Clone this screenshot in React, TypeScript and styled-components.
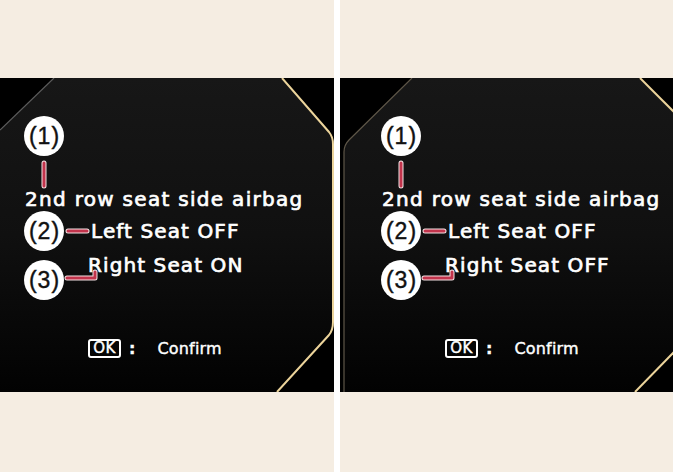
import React from 'react';
import styled, { createGlobalStyle } from 'styled-components';

const Global = createGlobalStyle`
  html, body { margin: 0; padding: 0; background: #f5ede2; }
  body { width: 673px; height: 472px; overflow: hidden; }
`;

const Page = styled.div`
  display: flex;
  width: 673px;
  height: 472px;
  background: #f5ede2;
`;

const Column = styled.div<{ $w: number }>`
  width: ${(p) => p.$w}px;
  flex-shrink: 0;
  display: flex;
  flex-direction: column;
  padding: 78px 0 80px;
  box-sizing: border-box;
`;

const Divider = styled.div`
  width: 6px;
  flex-shrink: 0;
  background: #ffffff;
`;

const Screen = styled.div`
  position: relative;
  height: 314px;
  background: #000;
  overflow: hidden;
`;

const Frame = styled.svg`
  position: absolute;
  inset: 0;
  width: 100%;
  height: 100%;
`;

const Content = styled.div<{ $inset: number }>`
  position: relative;
  display: flex;
  flex-direction: column;
  align-items: flex-start;
  padding: 38px 0 0 ${(p) => p.$inset}px;
  font-family: "DejaVu Sans", "Liberation Sans", sans-serif;
  color: #fff;
`;

const Badge = styled.div<{ $mt?: number }>`
  width: 40px;
  height: 40px;
  flex-shrink: 0;
  border-radius: 50%;
  background: #fff;
  color: #111;
  display: flex;
  align-items: center;
  justify-content: center;
  margin-top: ${(p) => p.$mt ?? 0}px;
  font-family: "Liberation Sans", Arial, sans-serif;
  font-size: 23px;
  letter-spacing: 1px;
  padding-left: 1px;
  box-sizing: border-box;
  line-height: 1;
  -webkit-text-stroke: 0.4px #111;
`;

const Title = styled.div`
  font-size: 20px;
  line-height: 22px;
  letter-spacing: 1.3px;
  margin-left: 1px;
  white-space: nowrap;
  -webkit-text-stroke: 0.7px #fff;
`;

const Row = styled.div<{ $mt: number; $align: string }>`
  display: flex;
  align-items: ${(p) => p.$align};
  margin-top: ${(p) => p.$mt}px;
`;

const Label = styled.div<{ $ml?: number }>`
  font-size: 20px;
  line-height: 22px;
  letter-spacing: 1.1px;
  white-space: nowrap;
  margin-left: ${(p) => p.$ml ?? 0}px;
  -webkit-text-stroke: 0.7px #fff;
`;

const Stack = styled.div`
  display: flex;
  flex-direction: column;
  margin-left: 0;
`;

const LeadSvg = styled.svg<{ $ml: number; $mt: number }>`
  display: block;
  flex-shrink: 0;
  overflow: visible;
  margin-left: ${(p) => p.$ml}px;
  margin-top: ${(p) => p.$mt}px;
`;

const OkRow = styled.div`
  display: flex;
  align-items: center;
  margin: 39px 0 0 64px;
  font-size: 16px;
  -webkit-text-stroke: 0.4px #fff;
`;

const OkKey = styled.div`
  width: 33px;
  height: 19px;
  box-sizing: border-box;
  border: 2px solid #fff;
  border-radius: 3px;
  display: flex;
  align-items: center;
  justify-content: center;
  font-size: 15px;
  line-height: 1;
  letter-spacing: 0.5px;
`;

const Colon = styled.span`
  margin-left: 8px;
  font-weight: bold;
`;

const Action = styled.span`
  margin-left: 22px;
  letter-spacing: 0.2px;
`;

function Leader({ d, w, h, ml = 0, mt = 0 }: { d: string; w: number; h: number; ml?: number; mt?: number }) {
  return (
    <LeadSvg width={w} height={h} viewBox={`0 0 ${w} ${h}`} $ml={ml} $mt={mt}>
      <path d={d} stroke="#f4e2e4" strokeWidth={5} fill="none" strokeLinecap="round" strokeLinejoin="round" />
      <path d={d} stroke="#c2344c" strokeWidth={3} fill="none" strokeLinecap="round" strokeLinejoin="round" />
    </LeadSvg>
  );
}

function LeftFrame() {
  return (
    <Frame viewBox="0 0 334 314" preserveAspectRatio="none">
      <defs>
        <linearGradient id="fillL" x1="0" y1="0" x2="0" y2="1">
          <stop offset="0" stopColor="#171717" />
          <stop offset="0.5" stopColor="#101010" />
          <stop offset="1" stopColor="#020202" />
        </linearGradient>
      </defs>
      <path d="M0 52 L54 0 L282 0 L329 54 Q333 59 333 66 L333 244 Q333 252 329 257 L277 314 L0 314 Z" fill="url(#fillL)" />
      <path d="M0 52 L54 0" stroke="#5c5c5c" strokeWidth={1.2} fill="none" />
      <path d="M282 0 L329 54 Q333 59 333 66 L333 244 Q333 252 329 257 L277 314" stroke="#ecd49b" strokeWidth={2} fill="none" />
    </Frame>
  );
}

function RightFrame() {
  return (
    <Frame viewBox="0 0 333 314" preserveAspectRatio="none">
      <defs>
        <linearGradient id="fillR" x1="0" y1="0" x2="0" y2="1">
          <stop offset="0" stopColor="#171717" />
          <stop offset="0.5" stopColor="#101010" />
          <stop offset="1" stopColor="#020202" />
        </linearGradient>
      </defs>
      <path d="M4 314 L4 74 Q4 67 9 62 L72 0 L300 0 L333 32 L333 275 L295 314 Z" fill="url(#fillR)" />
      <path d="M4 314 L4 74 Q4 67 9 62 L72 0" stroke="#5e5648" strokeWidth={1.2} fill="none" />
      <path d="M300 0 L334 34" stroke="#ecd49b" strokeWidth={2} fill="none" />
      <path d="M334 274 L295 314" stroke="#ecd49b" strokeWidth={2} fill="none" />
    </Frame>
  );
}

type PanelProps = { width: number; inset: number; right: string; frame: 'left' | 'right' };

function Panel({ width, inset, right, frame }: PanelProps) {
  return (
    <Column $w={width}>
      <Screen>
        {frame === 'left' ? <LeftFrame /> : <RightFrame />}
        <Content $inset={inset}>
          <Badge>(1)</Badge>
          <Leader d="M5 2 V25" w={10} h={27} ml={15} mt={5} />
          <Title>2nd row seat side airbag</Title>
          <Row $mt={1} $align="center">
            <Badge>(2)</Badge>
            <Leader d="M3 5 H22" w={25} h={10} ml={1} />
            <Label $ml={1}>Left Seat OFF</Label>
          </Row>
          <Row $mt={3} $align="flex-start">
            <Badge $mt={6}>(3)</Badge>
            <Stack>
              <Label $ml={24}>Right Seat {right}</Label>
              <Leader d="M3 9 H31 V3" w={36} h={12} mt={-7} />
            </Stack>
          </Row>
          <OkRow>
            <OkKey>OK</OkKey>
            <Colon>:</Colon>
            <Action>Confirm</Action>
          </OkRow>
        </Content>
      </Screen>
    </Column>
  );
}

export default function App() {
  return (
    <>
      <Global />
      <Page>
        <Panel width={334} inset={24} right="ON" frame="left" />
        <Divider />
        <Panel width={333} inset={41} right="OFF" frame="right" />
      </Page>
    </>
  );
}
